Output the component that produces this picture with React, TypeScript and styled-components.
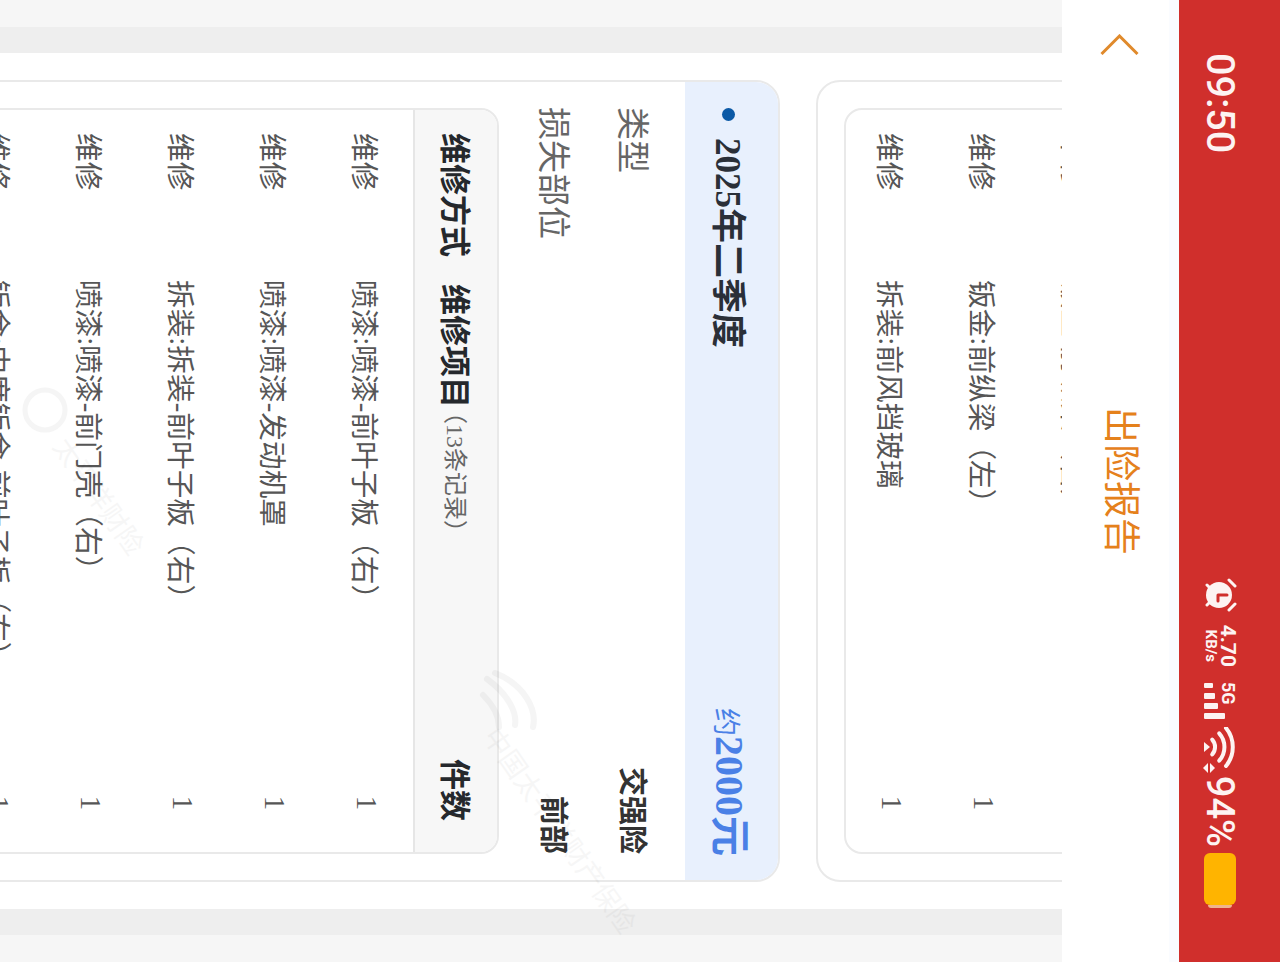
import React from "react";
import styled, { createGlobalStyle } from "styled-components";

const CJK = '"Liberation Serif", "Noto Sans CJK SC", serif';
const UI = 'Roboto, "Noto Sans", sans-serif';
const INK = "#fdf3f2";

const Global = createGlobalStyle`
  html, body { margin: 0; padding: 0; background: #fff; overflow: hidden; }
  * { box-sizing: border-box; }
`;

const Stage = styled.div`
  width: 1280px;
  height: 962px;
  overflow: hidden;
`;

/* The whole phone screenshot was taken sideways: a portrait page turned a quarter clockwise. */
const Phone = styled.div`
  position: relative;
  width: 962px;
  height: 1280px;
  display: flex;
  flex-direction: column;
  transform: translateX(1280px) rotate(90deg);
  transform-origin: 0 0;
  background: #fff;
  font-family: ${CJK};
`;

const StatusBar = styled.div`
  flex: 0 0 101px;
  background: #d02f2c;
  color: ${INK};
  font-family: ${UI};
  display: flex;
  align-items: flex-start;
  padding: 43px 57px 0 53px;
`;

const Time = styled.div`
  font-size: 39.5px;
  line-height: 34px;
  font-weight: 500;
`;

const StatusRight = styled.div`
  margin-left: auto;
  display: flex;
  align-items: flex-start;
`;

const NetSpeed = styled.div`
  margin: 0 15px 0 13px;
  width: 42px;
  display: flex;
  flex-direction: column;
  align-items: center;
  font-weight: 700;
`;

const SpeedValue = styled.span`
  font-size: 21px;
  line-height: 19px;
`;

const SpeedUnit = styled.span`
  font-size: 15px;
  line-height: 15px;
`;

const BatteryLevel = styled.div`
  font-size: 38px;
  line-height: 32px;
  font-weight: 500;
  margin: 1px 6px 0 2px;
`;

const Battery = styled.div`
  width: 52px;
  height: 32px;
  margin-top: 1px;
  border-radius: 6px;
  background: #ffb400;
  position: relative;

  &::after {
    content: "";
    position: absolute;
    right: -3px;
    top: 4px;
    width: 3px;
    height: 24px;
    border-radius: 0 3px 3px 0;
    background: #efb38e;
  }
`;

const NoticeGap = styled.div`
  flex: 0 0 10px;
  background: #fafcff;
`;

const Header = styled.header`
  flex: 0 0 107px;
  position: relative;
  z-index: 2;
  background: #fff;
  display: grid;
  grid-template-columns: 1fr auto 1fr;
  align-items: center;
  padding: 0 0 18px 0;
`;

const Back = styled.div`
  margin: 10px 0 0 34px;
  line-height: 0;
`;

const Title = styled.h1`
  margin: 0;
  font-family: "Noto Sans CJK SC", sans-serif;
  font-size: 37px;
  line-height: 40px;
  font-weight: 400;
  color: #e5811c;
`;

const Body = styled.main`
  flex: 1;
  min-height: 0;
  overflow: hidden;
  padding: 0 53px;
  background: linear-gradient(
    to right,
    #f6f6f6 27px,
    #eeeeee 27px,
    #eeeeee 935px,
    #f6f6f6 935px
  );
`;

const Sheet = styled.div`
  height: 100%;
  background: #fff;
  padding: 0 27px;
  overflow: hidden;
`;

const List = styled.div`
  margin-top: -90px;
  display: flex;
  flex-direction: column;
  gap: 36px;
`;

const Block = styled.section`
  border: 2px solid #e9e9e9;
  border-radius: 24px;
  overflow: hidden;
`;

const BlockHead = styled.div`
  height: 93px;
  background: #e8f0fd;
  display: flex;
  align-items: center;
  padding: 0 24px 0 26px;
`;

const Dot = styled.i`
  width: 13px;
  height: 13px;
  border-radius: 50%;
  background: #0b59a6;
  margin: 6px 17px 0 0;
`;

const Quarter = styled.span`
  font-size: 35px;
  font-weight: 700;
  color: #2a2f38;
`;

const Amount = styled.span`
  margin: 4px 0 0 auto;
  font-size: 40px;
  font-weight: 700;
  color: #4a80e6;
  line-height: 1;
`;

const Approx = styled.span`
  font-size: 28px;
  font-weight: 400;
`;

const Info = styled.div`
  padding: 30px 26px 37px 25px;
  display: flex;
  flex-direction: column;
  gap: 39px;
`;

const InfoRow = styled.div`
  display: flex;
  justify-content: space-between;
  align-items: center;
  height: 40px;
`;

const InfoLabel = styled.span`
  font-size: 33px;
  color: #666;
`;

const InfoValue = styled.span`
  font-size: 29px;
  font-weight: 700;
  color: #333;
`;

const Table = styled.div<{ $inset?: boolean }>`
  margin: ${(p) => (p.$inset ? "26px" : "0 26px")};
  border: 2px solid #e9e9e9;
  border-radius: 18px;
  overflow: hidden;
`;

const Head = styled.div`
  height: 84px;
  background: #f7f7f7;
  border-bottom: 2px solid #e6e6e6;
  display: flex;
  align-items: center;
  padding: 0 31px 4px 23px;
  font-size: 31px;
  font-weight: 700;
  color: #25282c;
`;

const HeadFirst = styled.span`
  width: 151px;
`;

const HeadNote = styled.span`
  margin-left: -8px;
  font-size: 24px;
  font-weight: 400;
  color: #666;
`;

const HeadLast = styled.span`
  margin-left: auto;
`;

const Row = styled.div`
  height: 92px;
  display: grid;
  grid-template-columns: 147px 1fr auto;
  align-items: center;
  padding: 0 42px 0 23px;
  font-size: 28.7px;
  color: #565656;
`;

const Mark = styled.div<{ $left: number; $top: number }>`
  position: absolute;
  left: ${(p) => p.$left}px;
  top: ${(p) => p.$top}px;
  z-index: 1;
  pointer-events: none;
  font-family: "Noto Sans CJK SC", sans-serif;
  font-size: 27px;
  line-height: 1;
  color: #000;
  opacity: 0.03;
  white-space: nowrap;
  transform: rotate(-35deg);
  transform-origin: 0 50%;
`;

const MarkLogo = styled.svg<{ $left: number; $top: number }>`
  position: absolute;
  left: ${(p) => p.$left}px;
  top: ${(p) => p.$top}px;
  z-index: 1;
  opacity: 0.035;
  pointer-events: none;
`;

const Alarm = () => (
  <svg width="34" height="34" viewBox="0 0 34 34" aria-hidden="true" style={{ marginTop: -1 }}>
    <circle cx="17" cy="19" r="13" fill={INK} />
    <path d="M17 11v9h6" fill="none" stroke="#d02f2c" strokeWidth="3" strokeLinecap="round" strokeLinejoin="round" />
    <path d="M2 9 8 3M32 9l-6-6M7 31l2-2M27 31l-2-2" fill="none" stroke={INK} strokeWidth="3" strokeLinecap="round" />
  </svg>
);

const Signal = () => (
  <svg width="38" height="34" viewBox="0 0 38 34" aria-hidden="true">
    <text x="0" y="15" fontFamily={UI} fontWeight="700" fontSize="18" fill={INK}>5G</text>
    <rect x="1" y="24" width="5" height="9" rx="1" fill={INK} />
    <rect x="11" y="22" width="6" height="11" rx="1" fill={INK} />
    <rect x="21" y="19" width="6" height="14" rx="1" fill={INK} />
    <rect x="31" y="12" width="6" height="21" rx="1" fill={INK} />
  </svg>
);

const Wifi = () => (
  <svg width="47" height="34" viewBox="0 0 47 34" aria-hidden="true" style={{ marginLeft: 7 }}>
    <g fill="none" stroke={INK} strokeWidth="4" strokeLinecap="round">
      <path d="M1 11a30 30 0 0 1 38 0" />
      <path d="M6.3 17.8a20.5 20.5 0 0 1 27.4 0" />
      <path d="M12.6 24.8a11 11 0 0 1 14.8 0" />
    </g>
    <path d="M20 27l5 6H15z" fill={INK} />
    <path d="M41 22l5 5H36z" fill={INK} />
    <path d="M41 34l-5-5h10z" fill={INK} />
  </svg>
);

const Chevron = () => (
  <svg width="21" height="39" viewBox="0 0 21 39" aria-hidden="true">
    <path d="M20 1.5 2 19.5l18 18" fill="none" stroke="#e08a2c" strokeWidth="3" />
  </svg>
);

const rowsA = [
  ["维修", "钣金:前纵梁（右）"],
  ["维修", "钣金:前纵梁（左）"],
  ["维修", "拆装:前风挡玻璃"],
];

const rowsB = [
  ["维修", "喷漆:喷漆-前叶子板（右）"],
  ["维修", "喷漆:喷漆-发动机罩"],
  ["维修", "拆装:拆装-前叶子板（右）"],
  ["维修", "喷漆:喷漆-前门壳（右）"],
  ["维修", "钣金:中度钣金-前叶子板（右）"],
];

const Rows = ({ data }: { data: string[][] }) => (
  <>
    {data.map(([kind, item]) => (
      <Row key={item}>
        <span>{kind}</span>
        <span>{item}</span>
        <span>1</span>
      </Row>
    ))}
  </>
);

export default function App() {
  return (
    <Stage>
      <Global />
      <Phone>
        <StatusBar>
          <Time>09:50</Time>
          <StatusRight>
            <Alarm />
            <NetSpeed>
              <SpeedValue>4.70</SpeedValue>
              <SpeedUnit>KB/s</SpeedUnit>
            </NetSpeed>
            <Signal />
            <Wifi />
            <BatteryLevel>94%</BatteryLevel>
            <Battery />
          </StatusRight>
        </StatusBar>
        <NoticeGap />
        <Header>
          <Back>
            <Chevron />
          </Back>
          <Title>出险报告</Title>
        </Header>
        <Body>
          <Sheet>
            <List>
              <Block>
                <Table $inset>
                  <Rows data={rowsA} />
                </Table>
              </Block>
              <Block>
                <BlockHead>
                  <Dot />
                  <Quarter>2025年二季度</Quarter>
                  <Amount>
                    <Approx>约</Approx>2000元
                  </Amount>
                </BlockHead>
                <Info>
                  <InfoRow>
                    <InfoLabel>类型</InfoLabel>
                    <InfoValue>交强险</InfoValue>
                  </InfoRow>
                  <InfoRow>
                    <InfoLabel>损失部位</InfoLabel>
                    <InfoValue>前部</InfoValue>
                  </InfoRow>
                </Info>
                <Table>
                  <Head>
                    <HeadFirst>维修方式</HeadFirst>
                    <span>维修项目</span>
                    <HeadNote>（13条记录）</HeadNote>
                    <HeadLast>件数</HeadLast>
                  </Head>
                  <Rows data={rowsB} />
                </Table>
              </Block>
            </List>
          </Sheet>
        </Body>
        <MarkLogo $left={665} $top={735} width="70" height="70" viewBox="0 0 70 70" aria-hidden="true">
          <path d="M8 50C20 20 45 8 62 12M14 58C30 36 48 28 60 30M30 62C42 50 52 46 62 46" fill="none" stroke="#000" strokeWidth="6" strokeLinecap="round" />
        </MarkLogo>
        <Mark $left={730} $top={775}>中国太平洋财产保险</Mark>
        <MarkLogo $left={385} $top={1210} width="50" height="50" viewBox="0 0 50 50" aria-hidden="true">
          <circle cx="25" cy="25" r="20" fill="none" stroke="#000" strokeWidth="5" />
        </MarkLogo>
        <Mark $left={440} $top={1205}>太平洋财险</Mark>
      </Phone>
    </Stage>
  );
}
